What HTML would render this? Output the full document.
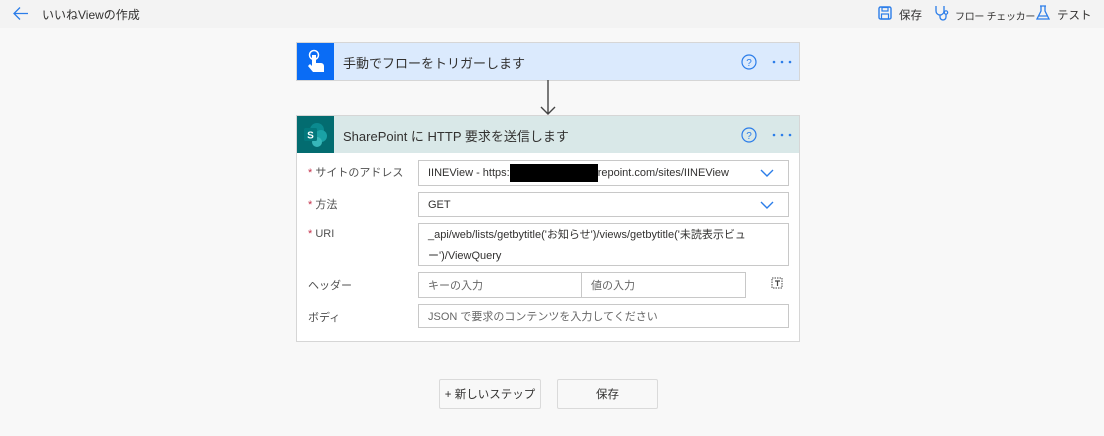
<!DOCTYPE html>
<html><head><meta charset="utf-8"><style>
*{box-sizing:border-box;margin:0;padding:0}
body{width:1104px;height:436px;background:#f8f8f8;font-family:"Liberation Sans","Noto Sans CJK JP",sans-serif;color:#323130;position:relative;overflow:hidden;font-size:12px}
.top{position:absolute;left:0;top:0;width:1104px;height:28px;background:#f3f3f3}
.abs{position:absolute}
.card{position:absolute;left:296px;width:504px;border:1px solid #d6d6d6}
.inp{position:absolute;background:#fff;border:1px solid #c8c8c8;font-size:11px;padding-left:9px;display:flex;align-items:center}
.lbl{position:absolute;left:308px;font-size:11px;color:#505050}
.req{color:#c4314b}
.ph{color:#666}
.chev{position:absolute;right:14px;top:5px}
.btn{position:absolute;top:379px;height:30px;background:#f8f8f8;border:1px solid #dadada;border-radius:2px;font-size:11.5px;display:flex;align-items:center;justify-content:center}
</style></head><body>
<div class="top"></div>
<svg class="abs" style="left:12px;top:6px" width="18" height="15" viewBox="0 0 18 15"><path d="M16 7.5H2M8 1.5L2 7.5 8 13.5" fill="none" stroke="#2b7de9" stroke-width="1.3"/></svg>
<div class="abs" style="left:42px;top:6px;font-size:12px">いいねViewの作成</div>
<svg class="abs" style="left:878px;top:6px" width="14" height="14" viewBox="0 0 14 14"><rect x="1" y="1" width="12" height="12" rx="1.5" fill="none" stroke="#2b7de9" stroke-width="1.4"/><rect x="4" y="1.5" width="6" height="3.5" fill="none" stroke="#2b7de9" stroke-width="1.2"/><rect x="3.5" y="8" width="7" height="5" fill="none" stroke="#2b7de9" stroke-width="1.2"/></svg>
<div class="abs" style="left:899px;top:7px;font-size:11.5px">保存</div>
<svg class="abs" style="left:934px;top:5px" width="16" height="17" viewBox="0 0 16 17"><path d="M2 1v5a4 4 0 008 0V1M6 10v2a3 3 0 006 0V9" fill="none" stroke="#2b7de9" stroke-width="1.3"/><circle cx="12" cy="7.5" r="1.7" fill="none" stroke="#2b7de9" stroke-width="1.2"/></svg>
<div class="abs" style="left:955px;top:8px;font-size:10px;letter-spacing:-0.3px;white-space:nowrap">フロー チェッカー</div>
<svg class="abs" style="left:1036px;top:5px" width="14" height="16" viewBox="0 0 14 16"><path d="M4 1h6M5 1v5L1 14h12L9 6V1" fill="none" stroke="#2b7de9" stroke-width="1.3"/><path d="M3 11h8" stroke="#2b7de9" stroke-width="1.2"/></svg>
<div class="abs" style="left:1057px;top:7px;font-size:11.5px">テスト</div>

<div class="card" style="top:42px;height:39px;background:#dbeafd">
 <div class="abs" style="left:0;top:0;width:37px;height:37px;background:#0a6cf5"></div>
 <svg class="abs" style="left:8px;top:6px" width="22" height="26" viewBox="0 0 22 26"><circle cx="9" cy="6" r="4.5" fill="none" stroke="#fff" stroke-width="1.5"/><path d="M7 6h4v8h5a3 3 0 013 3v6H8l-5-6 2-2 2 2z" fill="#fff"/></svg>
 <div class="abs" style="left:46px;top:10px;font-size:13px">手動でフローをトリガーします</div>
 <svg class="abs" style="left:444px;top:11px" width="16" height="16" viewBox="0 0 16 16"><circle cx="8" cy="8" r="7" fill="none" stroke="#2b7de9" stroke-width="1.2"/><text x="8" y="12" font-size="10" text-anchor="middle" fill="#2b7de9" font-family="Liberation Sans">?</text></svg>
 <svg class="abs" style="left:475px;top:17px" width="20" height="4"><circle cx="2" cy="2" r="1.3" fill="#2b7de9"/><circle cx="10" cy="2" r="1.3" fill="#2b7de9"/><circle cx="18" cy="2" r="1.3" fill="#2b7de9"/></svg>
</div>
<svg class="abs" style="left:540px;top:80px" width="16" height="36" viewBox="0 0 16 36"><path d="M8 0v34M1 27l7 7 7-7" fill="none" stroke="#444" stroke-width="1.4"/></svg>

<div class="card" style="top:115px;height:227px;background:#fff">
 <div class="abs" style="left:0;top:0;width:502px;height:37px;background:#d9e8e8"></div>
 <div class="abs" style="left:0;top:0;width:37px;height:37px;background:#036c70"></div>
 <svg class="abs" style="left:5px;top:6px" width="28" height="26" viewBox="0 0 28 26"><circle cx="15" cy="8" r="7" fill="#0b8a8f"/><circle cx="19" cy="14" r="6" fill="#1aa2a6"/><circle cx="15" cy="20" r="5" fill="#37b7b9"/><rect x="2" y="6" width="13" height="13" rx="1.5" fill="#03787c"/><text x="8.5" y="16.5" font-size="10" font-weight="bold" text-anchor="middle" fill="#fff" font-family="Liberation Sans">S</text></svg>
 <div class="abs" style="left:46px;top:10px;font-size:13px">SharePoint に HTTP 要求を送信します</div>
 <svg class="abs" style="left:444px;top:11px" width="16" height="16" viewBox="0 0 16 16"><circle cx="8" cy="8" r="7" fill="none" stroke="#2b7de9" stroke-width="1.2"/><text x="8" y="12" font-size="10" text-anchor="middle" fill="#2b7de9" font-family="Liberation Sans">?</text></svg>
 <svg class="abs" style="left:475px;top:17px" width="20" height="4"><circle cx="2" cy="2" r="1.3" fill="#2b7de9"/><circle cx="10" cy="2" r="1.3" fill="#2b7de9"/><circle cx="18" cy="2" r="1.3" fill="#2b7de9"/></svg>
</div>

<div class="lbl" style="top:164px"><span class="req">* </span>サイトのアドレス</div>
<div class="inp" style="left:418px;top:160px;width:371px;height:26px">IINEView - https:<span style="display:inline-block;width:88px;height:18px;background:#000"></span>repoint.com/sites/IINEView
<svg class="chev" width="14" height="14" viewBox="0 0 14 14"><path d="M1 4l6 6 6-6" fill="none" stroke="#2b7de9" stroke-width="1.4"/></svg></div>
<div class="lbl" style="top:196px"><span class="req">* </span>方法</div>
<div class="inp" style="left:418px;top:192px;width:371px;height:25px">GET
<svg class="chev" width="14" height="14" viewBox="0 0 14 14"><path d="M1 4l6 6 6-6" fill="none" stroke="#2b7de9" stroke-width="1.4"/></svg></div>
<div class="lbl" style="top:228px"><span class="req">* </span>URI</div>
<div class="inp" style="left:418px;top:223px;width:371px;height:43px;line-height:21px;display:block;padding-top:1px">_api/web/lists/getbytitle('お知らせ')/views/getbytitle('未読表示ビュ<br>ー')/ViewQuery</div>
<div class="lbl" style="top:277px">ヘッダー</div>
<div class="inp ph" style="left:418px;top:272px;width:164px;height:26px">キーの入力</div>
<div class="inp ph" style="left:581px;top:272px;width:165px;height:26px">値の入力</div>
<svg class="abs" style="left:771px;top:276px" width="12" height="13" viewBox="0 0 12 13"><rect x="1" y="2" width="10" height="10" fill="none" stroke="#444" stroke-dasharray="1.5 1"/><path d="M4 5h5M6.5 5v5" stroke="#444" stroke-width="1.2"/></svg>
<div class="lbl" style="top:309px">ボディ</div>
<div class="inp ph" style="left:418px;top:304px;width:371px;height:24px">JSON で要求のコンテンツを入力してください</div>

<div class="btn" style="left:439px;width:102px">+ 新しいステップ</div>
<div class="btn" style="left:557px;width:101px">保存</div>
</body></html>
